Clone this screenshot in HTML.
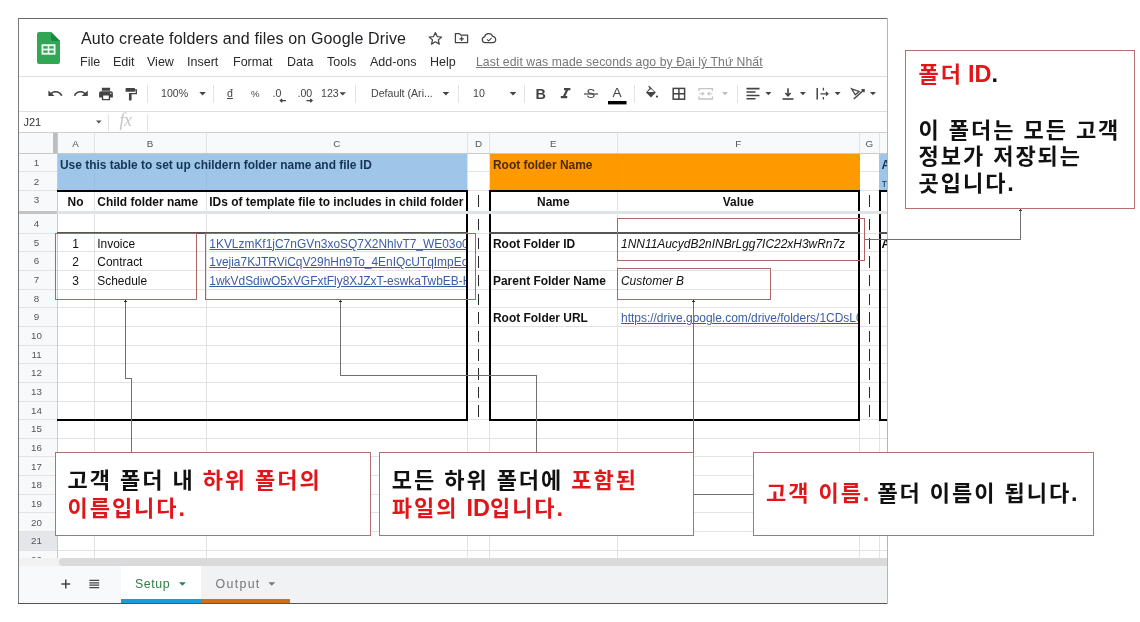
<!DOCTYPE html>
<html lang="ko">
<head>
<meta charset="utf-8">
<title>Auto create folders and files on Google Drive</title>
<style>
*{box-sizing:border-box;margin:0;padding:0}
html,body{width:1140px;height:622px;background:#fff;overflow:hidden}
body{position:relative;filter:blur(0.4px);font-family:"Liberation Sans","NanumGothic",sans-serif;color:#222}
.abs{position:absolute}
.ln{position:absolute;background:#e3e3e3}
.t{position:absolute;white-space:nowrap;line-height:1}
.menu{font-size:12.5px;color:#2a2a2a;top:56.2px}
.tb{font-size:10.6px;color:#444;top:87.8px}
.ch{font-size:9.8px;color:#555;top:138.5px;text-align:center}
.rh{font-size:9.8px;color:#555;left:18px;width:36px;text-align:center}
.c{font-size:11.95px;color:#111;margin-top:1.8px}
.b{font-weight:bold}
.lk{color:#3a5ca6;text-decoration:underline}
.box{position:absolute;background:#fff;border:1px solid #b27070}
.ko{font-family:"Liberation Sans","Noto Sans CJK KR",sans-serif;font-weight:bold;font-size:22px;line-height:28.2px;letter-spacing:1.95px;color:#111;white-space:nowrap;position:absolute}
.red{color:#e0161b}
.la{font-size:23.5px;letter-spacing:0;line-height:1}
</style>
</head>
<body>
<!-- FRAME -->
<div id="app" class="abs" style="left:0;top:0;width:888px;height:604px;overflow:hidden">
<!-- sheets logo -->
<svg class="abs" style="left:36px;top:31px" width="26" height="34" viewBox="0 0 26 34">
<path d="M3 1 H15 L24 10 V31 Q24 33 22 33 H3 Q1 33 1 31 V3 Q1 1 3 1 Z" fill="#31a655"/>
<path d="M15 1 L24 10 H17 Q15 10 15 8 Z" fill="#188a3e"/>
<rect x="5.5" y="13.2" width="14" height="10.5" fill="#eafbef"/>
<rect x="7.3" y="15.2" width="4.4" height="2.4" fill="#31a655"/><rect x="13.3" y="15.2" width="4.4" height="2.4" fill="#31a655"/>
<rect x="7.3" y="19.4" width="4.4" height="2.4" fill="#31a655"/><rect x="13.3" y="19.4" width="4.4" height="2.4" fill="#31a655"/>
</svg>
<!-- title -->
<div class="t" id="title" style="left:81px;top:30.5px;font-size:16px;color:#202124;letter-spacing:0.15px">Auto create folders and files on Google Drive</div>
<!-- title icons -->
<svg class="abs" style="left:426px;top:28px" width="76" height="20" viewBox="0 0 76 20" fill="none" stroke="#444" stroke-width="1.25" stroke-linejoin="round">
<path d="M9.4 4.6 L11.2 8.6 L15.6 9 L12.3 11.9 L13.3 16.1 L9.4 13.8 L5.5 16.1 L6.5 11.9 L3.2 9 L7.6 8.6 Z"/>
<path d="M29.4 5.6 H33.4 L34.8 7 H41.6 V14.6 H29.4 Z"/><path d="M35.6 8.6 V13 M33.4 10.8 H37.8" stroke-width="1.3"/>
<path d="M69.6 11.4 A3 3 0 0 0 66.6 8.4 A4.2 4.2 0 0 0 58.6 8.8 A3 3 0 0 0 59 14.7 H67 A2.7 2.7 0 0 0 69.6 11.4 Z"/><path d="M61 11.3 L62.7 12.8 L65.6 9.9" stroke-width="1.1"/>
</svg>
<!-- menus -->
<div class="t menu" style="left:80px">File</div>
<div class="t menu" style="left:113px">Edit</div>
<div class="t menu" style="left:147px">View</div>
<div class="t menu" style="left:187px">Insert</div>
<div class="t menu" style="left:233px">Format</div>
<div class="t menu" style="left:287px">Data</div>
<div class="t menu" style="left:327px">Tools</div>
<div class="t menu" style="left:370px">Add-ons</div>
<div class="t menu" style="left:430px">Help</div>
<div class="t menu" id="lastedit" style="left:476px;color:#777;text-decoration:underline;font-size:12.2px;letter-spacing:0.09px">Last edit was made seconds ago by Đại lý Thứ Nhất</div>
<!--TOOLBAR-->
<div class="ln" style="left:19px;top:76px;width:868px;height:1px;background:#dedede"></div>
<div class="ln" style="left:19px;top:111px;width:868px;height:1px;background:#dedede"></div>
<div class="ln" style="left:19px;top:132px;width:868px;height:1px;background:#cfcfcf"></div>
<!-- toolbar separators -->
<div class="ln" style="left:147px;top:85px;width:1px;height:18px"></div>
<div class="ln" style="left:213px;top:85px;width:1px;height:18px"></div>
<div class="ln" style="left:355px;top:85px;width:1px;height:18px"></div>
<div class="ln" style="left:458px;top:85px;width:1px;height:18px"></div>
<div class="ln" style="left:524px;top:85px;width:1px;height:18px"></div>
<div class="ln" style="left:634px;top:85px;width:1px;height:18px"></div>
<div class="ln" style="left:737px;top:85px;width:1px;height:18px"></div>
<!-- toolbar icons -->
<svg class="abs" style="left:40px;top:82px" width="846" height="26" viewBox="40 82 846 26" fill="none" stroke="#444" stroke-width="1.6">
<!-- undo -->
<g fill="#444" stroke="none">
<path transform="translate(47 86.2) scale(0.69 0.61)" d="M12.5 8c-2.65 0-5.05.99-6.9 2.6L2 7v9h9l-3.62-3.62c1.39-1.16 3.16-1.88 5.12-1.88 3.54 0 6.55 2.31 7.6 5.5l2.37-.78C21.08 11.03 17.15 8 12.5 8z"/>
<!-- redo -->
<path transform="translate(72.6 86.2) scale(0.69 0.61)" d="M18.4 10.6C16.55 8.99 14.15 8 11.5 8c-4.65 0-8.58 3.03-9.96 7.22L3.9 16c1.05-3.19 4.05-5.5 7.6-5.5 1.95 0 3.73.72 5.12 1.88L13 16h9V7l-3.6 3.6z"/>
<!-- print -->
<path transform="translate(97.7 85.8) scale(0.69)" d="M19 8H5c-1.66 0-3 1.34-3 3v6h4v4h12v-4h4v-6c0-1.66-1.34-3-3-3zm-3 11H8v-5h8v5zm3-7c-.55 0-1-.45-1-1s.45-1 1-1 1 .45 1 1-.45 1-1 1zm-1-9H6v4h12V3z"/>
<!-- paint roller -->
<path transform="translate(122.9 86.8) scale(0.67 0.62)" d="M18 4V3c0-.55-.45-1-1-1H5c-.55 0-1 .45-1 1v4c0 .55.45 1 1 1h12c.55 0 1-.45 1-1V6h1v4H9v11c0 .55.45 1 1 1h2c.55 0 1-.45 1-1v-9h8V4h-3z"/>
</g>
<!-- dropdown arrows -->
<g fill="#444" stroke="none">
<path d="M199.3 92 h6.6 l-3.3 3.4z"/>
<path d="M339.5 92.3 h6.4 l-3.2 3.3z"/>
<path d="M442.6 92 h6.6 l-3.3 3.4z"/>
<path d="M509.7 92 h6.6 l-3.3 3.4z"/>
<path d="M765.4 92 h6 l-3 3.2z"/>
<path d="M799.9 92 h6 l-3 3.2z"/>
<path d="M834.6 92 h6 l-3 3.2z"/>
<path d="M869.9 92 h6 l-3 3.2z"/>
<path d="M722 92 h6 l-3 3.2z" fill="#bdbdbd"/>
</g>
<!-- decimal arrows -->
<path d="M280.4 100.6 H286 M282.2 98.9 L280.4 100.6 L282.2 102.3" stroke-width="1.4"/>
<path d="M306.4 100.6 H312 M310.2 98.9 L312 100.6 L310.2 102.3" stroke-width="1.4"/>
<!-- strikethrough bar, text colour bar -->
<path d="M584 94 H598" stroke-width="1.2"/>
<rect x="608" y="101" width="18.5" height="3.4" fill="#000" stroke="none"/>
<!-- paint bucket -->
<path d="M650.5 87.3 L655.8 92.6 L651 97.4 L646 92.4 Z" fill="#444" stroke="none"/><path d="M647.6 92 H654.2 L651 88.8 Z" fill="#fff" stroke="none"/>
<path d="M648.6 86.2 L651.4 89" stroke-width="1.2"/>
<circle cx="657" cy="96.6" r="1.1" fill="#444" stroke="none"/>
<!-- borders -->
<rect x="673.2" y="88.4" width="11.4" height="10.8" stroke-width="1.5"/><path d="M678.9 88.4 V99.2 M673.2 93.8 H684.6" stroke-width="1.5"/>
<!-- merge (disabled) -->
<g stroke="#c4c4c4" stroke-width="1.3"><path d="M699 91 V88.6 H712.4 V91 M699 96.6 V99 H712.4 V96.6"/><path d="M699.4 93.8 H703.6 M708 93.8 H712.2 M702 92.2 L703.8 93.8 L702 95.4 M709.6 92.2 L707.8 93.8 L709.6 95.4" stroke-width="1.1"/></g>
<!-- halign -->
<path d="M746.5 88.6 H759.5 M746.5 92 H755.5 M746.5 95.4 H759.5 M746.5 98.8 H755.5" stroke-width="1.55"/>
<!-- valign -->
<path d="M782.5 99 H793.5" stroke-width="1.6"/><path d="M788 88.2 V95.4 M785.4 93 L788 95.8 L790.6 93" stroke-width="1.6"/>
<!-- wrap -->
<path d="M817.2 88 V99.6" stroke-width="1.5"/><path d="M823.4 87.8 V90.4 M823.4 97 V99.6" stroke-width="1.3"/><path d="M820.4 93.8 H828 M826 92 L828 93.8 L826 95.6" stroke-width="1.2"/>
<!-- rotate -->
<path d="M851.6 88.8 L859.2 91.4 L855.2 94.8 Z" stroke-width="1.3"/><path d="M853.8 99 L863.6 90.2 M861.4 89.8 H864 V92.2" stroke-width="1.5"/>
</svg>
<div class="t tb" style="left:161px">100%</div>
<div class="t tb" style="left:227px;text-decoration:underline">đ</div>
<div class="t tb" style="left:251px;font-size:9.6px;top:89px">%</div>
<div class="t tb" style="left:272.5px">.0</div>
<div class="t tb" style="left:297.5px">.00</div>
<div class="t tb" style="left:321px">123</div>
<div class="t tb" style="left:371px">Default (Ari...</div>
<div class="t tb" style="left:473px">10</div>
<div class="t" style="left:535.5px;top:86.5px;font-size:14.4px;font-weight:bold;color:#444">B</div>
<svg class="abs" style="left:556px;top:85.4px" width="20" height="18" viewBox="0 0 20 18"><path transform="scale(0.8 0.74)" d="M10 4v3h2.21l-3.42 8H6v3h8v-3h-2.21l3.42-8H18V4z" fill="#444"/></svg>
<div class="t" style="left:586.5px;top:87.4px;font-size:13px;color:#444">S</div>
<div class="t" style="left:612.4px;top:85.6px;font-size:13.6px;color:#444">A</div>
<!-- formula bar -->
<div class="t" style="left:23.5px;top:116.6px;font-size:11px;color:#333">J21</div>
<svg class="abs" style="left:95px;top:119px" width="8" height="6" viewBox="0 0 8 6"><path d="M1 1.6 h5.6 l-2.8 3z" fill="#555"/></svg>
<div class="ln" style="left:108px;top:114px;width:1px;height:17px"></div>
<div class="ln" style="left:147px;top:114px;width:1px;height:17px"></div>
<div class="t" style="left:119.5px;top:111.4px;font-size:18px;font-style:italic;color:#c6c6c6;font-family:'Liberation Serif',serif;letter-spacing:-0.5px">fx</div>

<!--GRID-->
<div class="abs" id="grid" style="left:19px;top:133px;width:868px;height:424.5px;overflow:hidden;background:#fff">
<div class="abs" style="left:0;top:0;width:868px;height:20.3px;background:#f8f9fa"></div>
<div class="abs" style="left:0;top:0;width:38px;height:425px;background:#f8f9fa"></div>
<div class="abs" style="left:0;top:398.55px;width:38px;height:18.65px;background:#e4e6ea"></div>
<div class="ln" style="left:0;top:19.8px;width:868px;height:1px"></div>
<div class="ln" style="left:0;top:38.45px;width:868px;height:1px"></div>
<div class="ln" style="left:0;top:57.1px;width:868px;height:1px"></div>
<div class="ln" style="left:0;top:99.65px;width:868px;height:1px"></div>
<div class="ln" style="left:0;top:118.3px;width:868px;height:1px"></div>
<div class="ln" style="left:0;top:136.95px;width:868px;height:1px"></div>
<div class="ln" style="left:0;top:155.6px;width:868px;height:1px"></div>
<div class="ln" style="left:0;top:174.25px;width:868px;height:1px"></div>
<div class="ln" style="left:0;top:192.9px;width:868px;height:1px"></div>
<div class="ln" style="left:0;top:211.55px;width:868px;height:1px"></div>
<div class="ln" style="left:0;top:230.2px;width:868px;height:1px"></div>
<div class="ln" style="left:0;top:248.85px;width:868px;height:1px"></div>
<div class="ln" style="left:0;top:267.5px;width:868px;height:1px"></div>
<div class="ln" style="left:0;top:286.15px;width:868px;height:1px"></div>
<div class="ln" style="left:0;top:304.8px;width:868px;height:1px"></div>
<div class="ln" style="left:0;top:323.45px;width:868px;height:1px"></div>
<div class="ln" style="left:0;top:342.1px;width:868px;height:1px"></div>
<div class="ln" style="left:0;top:360.75px;width:868px;height:1px"></div>
<div class="ln" style="left:0;top:379.4px;width:868px;height:1px"></div>
<div class="ln" style="left:0;top:398.05px;width:868px;height:1px"></div>
<div class="ln" style="left:0;top:416.7px;width:868px;height:1px"></div>
<div class="ln" style="left:0;top:435.35px;width:868px;height:1px"></div>
<div class="ln" style="left:37.5px;top:0;width:1px;height:425px"></div>
<div class="ln" style="left:74.5px;top:0;width:1px;height:425px"></div>
<div class="ln" style="left:186.7px;top:0;width:1px;height:425px"></div>
<div class="ln" style="left:447.9px;top:0;width:1px;height:425px"></div>
<div class="ln" style="left:470.0px;top:0;width:1px;height:425px"></div>
<div class="ln" style="left:597.7px;top:0;width:1px;height:425px"></div>
<div class="ln" style="left:840.0px;top:0;width:1px;height:425px"></div>
<div class="ln" style="left:859.7px;top:0;width:1px;height:425px"></div>
<div class="abs" style="left:38px;top:20.3px;width:410.4px;height:38.0px;background:#9fc5e8"></div>
<div class="abs" style="left:470.5px;top:20.3px;width:370.0px;height:38.0px;background:#ff9900"></div>
<div class="abs" style="left:860.2px;top:20.3px;width:20px;height:38.0px;background:#9fc5e8"></div>
<div class="abs" style="left:74.5px;top:39.5px;width:1px;height:18px;background:#97bee2"></div>
<div class="abs" style="left:186.7px;top:39.5px;width:1px;height:18px;background:#97bee2"></div>
<div class="abs" style="left:597.7px;top:20.3px;width:1px;height:37px;background:#fa9500"></div>
<div class="ln" style="left:0;top:19.8px;width:868px;height:1px;background:#c9c9c9"></div>
<div class="ln" style="left:37.5px;top:0;width:1px;height:425px;background:#c9c9c9"></div>
<div class="abs" style="left:34.4px;top:0;width:3.8px;height:20.3px;background:#bdbdbd"></div>
<div class="t ch" style="left:46.5px;width:20px;top:5.6px">A</div>
<div class="t ch" style="left:121.1px;width:20px;top:5.6px">B</div>
<div class="t ch" style="left:307.8px;width:20px;top:5.6px">C</div>
<div class="t ch" style="left:449.45px;width:20px;top:5.6px">D</div>
<div class="t ch" style="left:524.35px;width:20px;top:5.6px">E</div>
<div class="t ch" style="left:709.35px;width:20px;top:5.6px">F</div>
<div class="t ch" style="left:840.35px;width:20px;top:5.6px">G</div>
<div class="t rh" style="left:0;width:35px;top:24.9px">1</div>
<div class="t rh" style="left:0;width:35px;top:43.55px">2</div>
<div class="t rh" style="left:0;width:35px;top:62.2px">3</div>
<div class="t rh" style="left:0;width:35px;top:86.1px">4</div>
<div class="t rh" style="left:0;width:35px;top:104.75px">5</div>
<div class="t rh" style="left:0;width:35px;top:123.4px">6</div>
<div class="t rh" style="left:0;width:35px;top:142.05px">7</div>
<div class="t rh" style="left:0;width:35px;top:160.7px">8</div>
<div class="t rh" style="left:0;width:35px;top:179.35px">9</div>
<div class="t rh" style="left:0;width:35px;top:198.0px">10</div>
<div class="t rh" style="left:0;width:35px;top:216.65px">11</div>
<div class="t rh" style="left:0;width:35px;top:235.3px">12</div>
<div class="t rh" style="left:0;width:35px;top:253.95px">13</div>
<div class="t rh" style="left:0;width:35px;top:272.6px">14</div>
<div class="t rh" style="left:0;width:35px;top:291.25px">15</div>
<div class="t rh" style="left:0;width:35px;top:309.9px">16</div>
<div class="t rh" style="left:0;width:35px;top:328.55px">17</div>
<div class="t rh" style="left:0;width:35px;top:347.2px">18</div>
<div class="t rh" style="left:0;width:35px;top:365.85px">19</div>
<div class="t rh" style="left:0;width:35px;top:384.5px">20</div>
<div class="t rh" style="left:0;width:35px;top:403.15px">21</div>
<div class="t rh" style="left:0;width:35px;top:421.8px">22</div>
<div class="t c b" style="left:41px;top:25.4px;width:405px;overflow:hidden;color:#163453">Use this table to set up childern folder name and file ID</div>
<div class="t c b" style="left:474px;top:25.4px;width:200px;overflow:hidden;color:#4a2a00">Root folder Name</div>
<div class="t c b" style="left:862.5px;top:25.4px;width:10px;overflow:hidden;color:#163453">A</div>
<div class="t c " style="left:862.5px;top:45.15px;width:10px;overflow:hidden;color:#163453;font-size:9px">T</div>
<div class="t c b" style="left:38px;top:62.7px;width:37px;overflow:hidden;text-align:center">No</div>
<div class="t c b" style="left:78.3px;top:62.7px;width:109px;overflow:hidden;">Child folder name</div>
<div class="t c b" style="left:190.3px;top:62.7px;width:257px;overflow:hidden;">IDs of template file to includes in child folder</div>
<div class="t c b" style="left:470.5px;top:62.7px;width:127.7px;overflow:hidden;text-align:center">Name</div>
<div class="t c b" style="left:598.2px;top:62.7px;width:242.3px;overflow:hidden;text-align:center">Value</div>
<div class="t c " style="left:38px;top:104.05px;width:37px;overflow:hidden;text-align:center">1</div>
<div class="t c " style="left:78.3px;top:104.05px;width:105px;overflow:hidden;">Invoice</div>
<div class="t c lk" style="left:190.3px;top:104.05px;width:257px;overflow:hidden;">1KVLzmKf1jC7nGVn3xoSQ7X2NhlvT7_WE03o0Xd</div>
<div class="t c " style="left:38px;top:122.7px;width:37px;overflow:hidden;text-align:center">2</div>
<div class="t c " style="left:78.3px;top:122.7px;width:105px;overflow:hidden;">Contract</div>
<div class="t c lk" style="left:190.3px;top:122.7px;width:257px;overflow:hidden;">1vejia7KJTRViCqV29hHn9To_4EnIQcUTqImpEoW</div>
<div class="t c " style="left:38px;top:141.35px;width:37px;overflow:hidden;text-align:center">3</div>
<div class="t c " style="left:78.3px;top:141.35px;width:105px;overflow:hidden;">Schedule</div>
<div class="t c lk" style="left:190.3px;top:141.35px;width:257px;overflow:hidden;">1wkVdSdiwO5xVGFxtFly8XJZxT-eswkaTwbEB-Hk</div>
<div class="t c b" style="left:474px;top:104.05px;width:124px;overflow:hidden;">Root Folder ID</div>
<div class="t c " style="left:602px;top:104.05px;width:238px;overflow:hidden;font-style:italic">1NN11AucydB2nINBrLgg7IC22xH3wRn7z</div>
<div class="t c b" style="left:474px;top:141.35px;width:124px;overflow:hidden;">Parent Folder Name</div>
<div class="t c " style="left:602px;top:141.35px;width:238px;overflow:hidden;font-style:italic">Customer B</div>
<div class="t c b" style="left:474px;top:178.65px;width:124px;overflow:hidden;">Root Folder URL</div>
<div class="t c lk" style="left:602px;top:178.65px;width:238px;overflow:hidden;">https://drive.google.com/drive/folders/1CDsL0k</div>
<div class="t c b" style="left:862.5px;top:104.05px;width:10px;overflow:hidden;">A</div>
<div class="abs" style="left:458.84999999999997px;top:62.0px;width:1.5px;height:11.6px;background:#2b2b2b"></div>
<div class="abs" style="left:849.75px;top:62.0px;width:1.5px;height:11.6px;background:#2b2b2b"></div>
<div class="abs" style="left:458.84999999999997px;top:85.9px;width:1.5px;height:11.6px;background:#2b2b2b"></div>
<div class="abs" style="left:849.75px;top:85.9px;width:1.5px;height:11.6px;background:#2b2b2b"></div>
<div class="abs" style="left:458.84999999999997px;top:104.55px;width:1.5px;height:11.6px;background:#2b2b2b"></div>
<div class="abs" style="left:849.75px;top:104.55px;width:1.5px;height:11.6px;background:#2b2b2b"></div>
<div class="abs" style="left:458.84999999999997px;top:123.2px;width:1.5px;height:11.6px;background:#2b2b2b"></div>
<div class="abs" style="left:849.75px;top:123.2px;width:1.5px;height:11.6px;background:#2b2b2b"></div>
<div class="abs" style="left:458.84999999999997px;top:141.85px;width:1.5px;height:11.6px;background:#2b2b2b"></div>
<div class="abs" style="left:849.75px;top:141.85px;width:1.5px;height:11.6px;background:#2b2b2b"></div>
<div class="abs" style="left:458.84999999999997px;top:160.5px;width:1.5px;height:11.6px;background:#2b2b2b"></div>
<div class="abs" style="left:849.75px;top:160.5px;width:1.5px;height:11.6px;background:#2b2b2b"></div>
<div class="abs" style="left:458.84999999999997px;top:179.15px;width:1.5px;height:11.6px;background:#2b2b2b"></div>
<div class="abs" style="left:849.75px;top:179.15px;width:1.5px;height:11.6px;background:#2b2b2b"></div>
<div class="abs" style="left:458.84999999999997px;top:197.8px;width:1.5px;height:11.6px;background:#2b2b2b"></div>
<div class="abs" style="left:849.75px;top:197.8px;width:1.5px;height:11.6px;background:#2b2b2b"></div>
<div class="abs" style="left:458.84999999999997px;top:216.45px;width:1.5px;height:11.6px;background:#2b2b2b"></div>
<div class="abs" style="left:849.75px;top:216.45px;width:1.5px;height:11.6px;background:#2b2b2b"></div>
<div class="abs" style="left:458.84999999999997px;top:235.1px;width:1.5px;height:11.6px;background:#2b2b2b"></div>
<div class="abs" style="left:849.75px;top:235.1px;width:1.5px;height:11.6px;background:#2b2b2b"></div>
<div class="abs" style="left:458.84999999999997px;top:253.75px;width:1.5px;height:11.6px;background:#2b2b2b"></div>
<div class="abs" style="left:849.75px;top:253.75px;width:1.5px;height:11.6px;background:#2b2b2b"></div>
<div class="abs" style="left:458.84999999999997px;top:272.4px;width:1.5px;height:11.6px;background:#2b2b2b"></div>
<div class="abs" style="left:849.75px;top:272.4px;width:1.5px;height:11.6px;background:#2b2b2b"></div>
<div class="abs" style="left:38px;top:57.4px;width:410.6px;height:2px;background:#000"></div>
<div class="abs" style="left:38px;top:285.7px;width:410.6px;height:2px;background:#000"></div>
<div class="abs" style="left:446.6px;top:57.4px;width:2px;height:230.3px;background:#000"></div>
<div class="abs" style="left:469.8px;top:57.4px;width:371.5px;height:2px;background:#000"></div>
<div class="abs" style="left:469.8px;top:285.7px;width:371.5px;height:2px;background:#000"></div>
<div class="abs" style="left:469.8px;top:57.4px;width:2px;height:230.3px;background:#000"></div>
<div class="abs" style="left:839.3px;top:57.4px;width:2px;height:230.3px;background:#000"></div>
<div class="abs" style="left:859.6px;top:57.4px;width:2px;height:230.3px;background:#000"></div>
<div class="abs" style="left:859.6px;top:57.4px;width:21.4px;height:2px;background:#000"></div>
<div class="abs" style="left:859.6px;top:285.7px;width:21.4px;height:2px;background:#000"></div>
<div class="abs" style="left:38px;top:98.9px;width:410.6px;height:2.5px;background:#555"></div>
<div class="abs" style="left:469.8px;top:98.9px;width:371.5px;height:2.5px;background:#555"></div>
<div class="abs" style="left:859.6px;top:98.9px;width:21.4px;height:2.5px;background:#555"></div>
<div class="abs" style="left:0;top:77.6px;width:868px;height:3.9px;background:#dfe2e6"></div>
<div class="abs" style="left:0;top:77.6px;width:38px;height:3.9px;background:#c4c4c4"></div>
</div>
<!--BOTTOM-->
<div class="abs" style="left:19px;top:557.5px;width:868px;height:8.5px;background:#f1f1f1"></div>
<div class="abs" style="left:58.5px;top:558px;width:840px;height:7.5px;background:#dadada;border-radius:4px 0 0 4px"></div>
<div class="abs" style="left:19px;top:565.5px;width:868px;height:38px;background:#f1f2f3"></div>
<div class="abs" style="left:19px;top:565.5px;width:101.5px;height:38px;background:#f8f9fa"></div>
<div class="abs" style="left:120.5px;top:565.5px;width:80.3px;height:38px;background:#fff"></div>
<div class="abs" style="left:120.5px;top:599px;width:80.3px;height:4px;background:#1b9cd8"></div>
<div class="abs" style="left:200.8px;top:599px;width:89.6px;height:4px;background:#c9711d"></div>
<svg class="abs" style="left:58px;top:576px" width="50" height="16" viewBox="58 576 50 16" stroke="#444" fill="none"><path d="M61.4 584 H70.2 M65.8 579.6 V588.4" stroke-width="1.5"/><path d="M89.4 580.4 H99.2 M89.4 582.8 H99.2 M89.4 585.2 H99.2 M89.4 587.6 H99.2" stroke-width="1.3"/></svg>
<div class="t" style="left:135px;top:577.6px;font-size:12.4px;color:#2f7d47;letter-spacing:0.55px">Setup</div>
<div class="t" style="left:215.6px;top:577.6px;font-size:12.4px;color:#777;letter-spacing:1.3px">Output</div>
<svg class="abs" style="left:178px;top:581px" width="100" height="7" viewBox="178 581 100 7"><path d="M179 582.2 h6.8 l-3.4 3.6z" fill="#2f7d47"/><path d="M268.4 582.2 h6.8 l-3.4 3.6z" fill="#777"/></svg>

<!-- frame borders -->
<div class="abs" style="left:18px;top:18px;width:870px;height:1px;background:#6a6a6a"></div>
<div class="abs" style="left:18px;top:18px;width:1px;height:586px;background:#7a7a7a"></div>
<div class="abs" style="left:18px;top:603px;width:870px;height:1px;background:#555"></div>
<div class="abs" style="left:887px;top:18px;width:1px;height:586px;background:#b5b5b5"></div>
</div>
<!--ANNOT-->
<svg class="abs" style="left:0;top:0" width="1140" height="622" viewBox="0 0 1140 622" fill="none" stroke="#707070" stroke-width="1" shape-rendering="crispEdges">
<!-- connectors -->
<path d="M125.5 299 V378.5 H131.5 V452"/>
<path d="M340.5 299 V375.5 H536.5 V452"/>
<path d="M693.5 299 V452"/>
<path d="M693 494.5 H753"/>
<path d="M864 239.5 H1020.5 V208"/>
<g fill="#333" stroke="none"><path d="M125.5 299 l-1.6 3 h3.2z"/><path d="M340.5 299 l-1.6 3 h3.2z"/><path d="M693.5 299 l-1.6 3 h3.2z"/><path d="M1020.5 208 l-1.6 3 h3.2z"/></g>
<!-- highlight rectangles -->
<g stroke="#ad6565">
<rect x="55.5" y="233.5" width="141" height="66"/>
<rect x="205.5" y="233.5" width="270" height="66"/>
<rect x="617.5" y="218.5" width="246.5" height="42"/>
<rect x="617.5" y="268.5" width="153" height="31"/>
</g>
</svg>
<div class="box" style="left:54.5px;top:452px;width:316px;height:84px"></div>
<div class="box" style="left:379px;top:452px;width:315px;height:84px"></div>
<div class="box" style="left:753px;top:452px;width:341px;height:84px"></div>
<div class="box" style="left:905px;top:50px;width:230px;height:158.5px"></div>
<div class="ko" id="k1a" style="left:67.5px;top:466.5px">고객 폴더 내 <span class="red">하위 폴더의</span></div>
<div class="ko red" id="k1b" style="left:67.5px;top:494.7px">이름입니다<span class="la">.</span></div>
<div class="ko" id="k2a" style="left:391.8px;top:466.5px">모든 하위 폴더에 <span class="red">포함된</span></div>
<div class="ko red" id="k2b" style="left:391.8px;top:494.7px">파일의 <span class="la">ID</span>입니다<span class="la">.</span></div>
<div class="ko" id="k3" style="left:766px;top:480px"><span class="red">고객 이름<span class="la">.</span></span> 폴더 이름이 됩니다<span class="la">.</span></div>
<div class="ko" id="k4a" style="left:918.6px;top:61.4px"><span class="red">폴더 <span class="la" style="margin-left:-3px">ID</span></span><span class="la">.</span></div>
<div class="ko" id="k4b" style="left:918.6px;top:116.7px">이 폴더는 모든 고객</div>
<div class="ko" id="k4c" style="left:918.6px;top:143.1px">정보가 저장되는</div>
<div class="ko" id="k4d" style="left:918.6px;top:170.3px">곳입니다<span class="la">.</span></div>
</body>
</html>
